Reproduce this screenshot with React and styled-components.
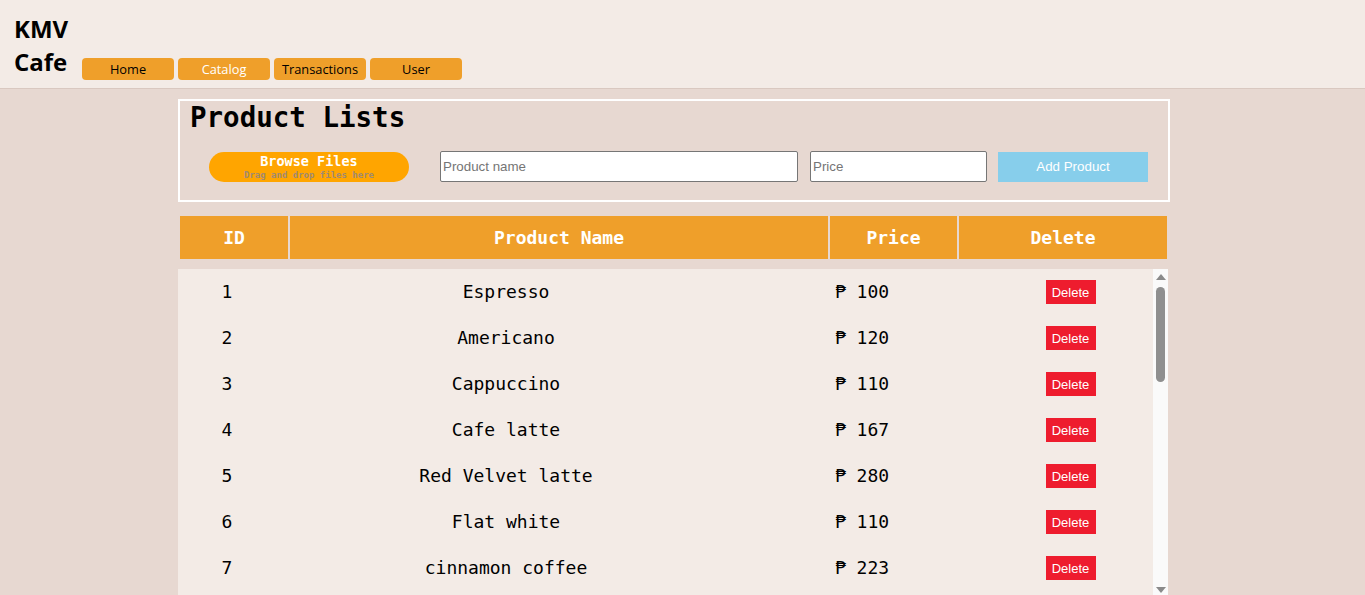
import React from "react";
import styled, { createGlobalStyle } from "styled-components";

const Global = createGlobalStyle`
  html, body { margin: 0; padding: 0; }
  body {
    background: #e7d8d1;
    font-family: "Open Sans", "Noto Sans", sans-serif;
  }
  * { box-sizing: border-box; }
`;

const Header = styled.header`
  height: 89px;
  background: #f3ebe6;
  border-bottom: 1px solid #d9c8c0;
  display: flex;
  align-items: flex-end;
  padding: 12px 14px 8px;
`;

const Logo = styled.div`
  width: 60px;
  font-family: "Open Sans", sans-serif;
  font-weight: 700;
  font-size: 24px;
  line-height: 33px;
  color: #000;
  margin-bottom: 2px;
  margin-right: 8px;
`;

const Nav = styled.nav`
  display: flex;
  gap: 4px;
`;

const NavButton = styled.button`
  width: 92px;
  height: 22px;
  border: none;
  border-radius: 4px;
  background: #ef9f2a;
  color: ${(p) => (p.$active ? "#fff" : "#000")};
  font-family: "Open Sans", sans-serif;
  font-weight: 500;
  font-size: 12.8px;
  padding: 0;
  cursor: pointer;
`;

const Main = styled.main`
  margin: 10px 0 0 178px;
  width: 992px;
`;

const FormBox = styled.section`
  border: 2px solid #fff;
  height: 103px;
  padding: 0 10px;
`;

const Title = styled.h1`
  margin: 0;
  font-family: "DejaVu Sans Mono", monospace;
  font-weight: 700;
  font-size: 27.5px;
  line-height: 33px;
  color: #000;
`;

const Controls = styled.div`
  display: flex;
  align-items: center;
  margin-top: 17px;
  padding-left: 19px;
`;

const Browse = styled.label`
  width: 200px;
  height: 30px;
  border-radius: 15px;
  background: #ffa500;
  display: flex;
  flex-direction: column;
  align-items: center;
  justify-content: flex-start;
  font-family: "DejaVu Sans Mono", monospace;
  font-weight: 700;
  margin-right: 31px;
  padding-top: 1px;
`;

const BrowseTitle = styled.span`
  color: #fff;
  font-size: 13.5px;
  line-height: 16px;
`;

const BrowseSub = styled.span`
  color: #a08a72;
  font-size: 9px;
  line-height: 12px;
`;

const Input = styled.input`
  width: ${(p) => p.$w}px;
  height: 31px;
  border: 1px solid #767676;
  border-radius: 2px;
  background: #fff;
  font-family: "Liberation Sans", Arial, sans-serif;
  font-size: 13.33px;
  padding: 1px 2px;
  margin-right: ${(p) => p.$mr}px;
  &::placeholder { color: #757575; }
`;

const AddButton = styled.button`
  width: 150px;
  height: 30px;
  border: none;
  background: #87ceeb;
  color: #fff;
  font-family: "Liberation Sans", Arial, sans-serif;
  font-size: 13.33px;
`;

const HeadRow = styled.div`
  display: grid;
  grid-template-columns: 108px 538px 127px 208px;
  gap: 2px;
  padding: 2px;
  margin-top: 12px;
`;

const HeadCell = styled.div`
  height: 43px;
  background: #ef9f2a;
  color: #fff;
  font-family: "DejaVu Sans Mono", monospace;
  font-weight: 700;
  font-size: 18px;
  display: flex;
  align-items: center;
  justify-content: center;
`;

const Body = styled.div`
  margin-top: 8px;
  width: 990px;
  height: 326px;
  display: flex;
  background: #f3ebe6;
`;

const Rows = styled.div`
  flex: 1;
  overflow: hidden;
`;

const ScrollTrack = styled.div`
  width: 15px;
  background: #fafafa;
  display: flex;
  flex-direction: column;
  align-items: center;
  padding: 5px 0 2px;
`;

const Arrow = styled.div`
  width: 0;
  height: 0;
  border-left: 5px solid transparent;
  border-right: 5px solid transparent;
  ${(p) =>
    p.$down
      ? "border-top: 6px solid #8a8a8a; margin-top: auto;"
      : "border-bottom: 6px solid #8a8a8a;"}
`;

const Thumb = styled.div`
  margin-top: 7px;
  width: 9px;
  height: 95px;
  border-radius: 4.5px;
  background: #8f8f8f;
`;

const Row = styled.div`
  display: grid;
  grid-template-columns: 98px 460px 252px 165px;
  height: 46px;
  align-items: center;
`;

const Cell = styled.div`
  font-family: "DejaVu Sans Mono", monospace;
  font-size: 18px;
  line-height: 22px;
  color: #000;
  display: flex;
  justify-content: center;
  padding-bottom: ${(p) => (p.$button ? 0 : 1)}px;
`;

const DeleteButton = styled.button`
  width: 50px;
  height: 24px;
  border: none;
  background: #ee1c2e;
  color: #fff;
  font-family: "Liberation Sans", Arial, sans-serif;
  font-size: 13px;
  padding: 0;
`;

const products = [
  ["Espresso", 100],
  ["Americano", 120],
  ["Cappuccino", 110],
  ["Cafe latte", 167],
  ["Red Velvet latte", 280],
  ["Flat white", 110],
  ["cinnamon coffee", 223],
];

export default function App() {
  return (
    <>
      <Global />
      <Header>
        <Logo>KMV Cafe</Logo>
        <Nav>
          <NavButton>Home</NavButton>
          <NavButton $active>Catalog</NavButton>
          <NavButton>Transactions</NavButton>
          <NavButton>User</NavButton>
        </Nav>
      </Header>
      <Main>
        <FormBox>
          <Title>Product Lists</Title>
          <Controls>
            <Browse>
              <BrowseTitle>Browse Files</BrowseTitle>
              <BrowseSub>Drag and drop files here</BrowseSub>
            </Browse>
            <Input $w={358} $mr={12} placeholder="Product name" />
            <Input $w={177} $mr={11} placeholder="Price" />
            <AddButton>Add Product</AddButton>
          </Controls>
        </FormBox>
        <HeadRow>
          <HeadCell>ID</HeadCell>
          <HeadCell>Product Name</HeadCell>
          <HeadCell>Price</HeadCell>
          <HeadCell>Delete</HeadCell>
        </HeadRow>
        <Body>
          <Rows>
            {products.map(([name, price], i) => (
              <Row key={i}>
                <Cell>{i + 1}</Cell>
                <Cell>{name}</Cell>
                <Cell>₱ {price}</Cell>
                <Cell $button>
                  <DeleteButton>Delete</DeleteButton>
                </Cell>
              </Row>
            ))}
          </Rows>
          <ScrollTrack>
            <Arrow />
            <Thumb />
            <Arrow $down />
          </ScrollTrack>
        </Body>
      </Main>
    </>
  );
}
